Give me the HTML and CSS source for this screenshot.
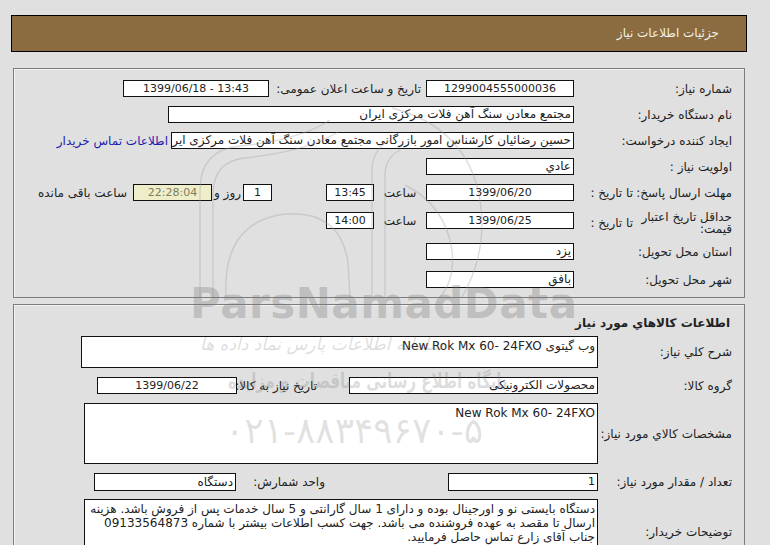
FILE: index.html
```html
<!DOCTYPE html>
<html lang="fa" dir="rtl">
<head>
<meta charset="utf-8">
<title>جزئیات اطلاعات نیاز</title>
<link rel="stylesheet" href="styles.css">
</head>
<body>
<div class="page">
  <div class="header">جزئیات اطلاعات نیاز</div>

  <div class="panel p1">
    <div class="form">
      <div class="row">
        <div class="lbl">شماره نیاز:</div>
        <div class="inp w148 c n">1299004555000036</div>
        <div class="lbl2">تاریخ و ساعت اعلان عمومی:</div>
        <div class="inp w146 c n ltr">1399/06/18 - 13:43</div>
      </div>
      <div class="row">
        <div class="lbl">نام دستگاه خریدار:</div>
        <div class="inp w406">مجتمع معادن سنگ آهن فلات مرکزی ایران</div>
      </div>
      <div class="row">
        <div class="lbl">ایجاد کننده درخواست:</div>
        <div class="inp w403">حسین رضائیان کارشناس امور بازرگانی مجتمع معادن سنگ آهن فلات مرکزی ایران</div>
        <a class="link" href="#">اطلاعات تماس خریدار</a>
      </div>
      <div class="row">
        <div class="lbl">اولویت نیاز :</div>
        <div class="inp w148">عادي</div>
      </div>
      <div class="row mb2">
        <div class="lbla">مهلت ارسال پاسخ:</div>
        <div class="sub">تا تاریخ :</div>
        <div class="inp w148 c n">1399/06/20</div>
        <div class="sa">ساعت</div>
        <div class="inp w48 c n">13:45</div>
        <div class="inp w29 c n ml">1</div>
        <div class="roz">روز و</div>
        <div class="inp cd c n">22:28:04</div>
        <div class="rem">ساعت باقی مانده</div>
      </div>
      <div class="row tall mb2">
        <div class="lbla two">حداقل تاریخ اعتبار<br>قیمت:</div>
        <div class="sub subt">تا تاریخ :</div>
        <div class="inp w148 c n">1399/06/25</div>
        <div class="sa sat">ساعت</div>
        <div class="inp w48 c n">14:00</div>
      </div>
      <div class="row mb2">
        <div class="lbl">استان محل تحویل:</div>
        <div class="inp w148">یزد</div>
      </div>
      <div class="row">
        <div class="lbl">شهر محل تحویل:</div>
        <div class="inp w148">بافق</div>
      </div>
    </div>
  </div>

  <div class="panel p2">
    <div class="title">اطلاعات کالاهاي مورد نياز</div>
    <div class="form2">
      <div class="row2">
        <div class="lblb">شرح کلي نياز:</div>
        <div class="box b517 h32">وب گیتوی New Rok Mx 60- 24FXO</div>
      </div>
      <div class="row2">
        <div class="lblb">گروه کالا:</div>
        <div class="inp w249">محصولات الکترونیکی</div>
        <div class="lblc">تاریخ نیاز به کالا:</div>
        <div class="inp w140 c n">1399/06/22</div>
      </div>
      <div class="row2">
        <div class="lblb">مشخصات کالاي مورد نياز:</div>
        <div class="box b514 h61">New Rok Mx 60- 24FXO</div>
      </div>
      <div class="row2 mb-1">
        <div class="lblb">تعداد / مقدار مورد نياز:</div>
        <div class="inp w150 h18 n">1</div>
        <div class="lbld">واحد شمارش:</div>
        <div class="inp w142 h18">دستگاه</div>
      </div>
      <div class="row2">
        <div class="lblb">توضیحات خریدار:</div>
        <div class="box b514 h66 notes">دستگاه بایستی نو و اورجینال بوده و دارای 1 سال گارانتی و 5 سال خدمات پس از فروش باشد. هزینه<br>ارسال تا مقصد به عهده فروشنده می باشد. جهت کسب اطلاعات بیشتر با شماره 09133564873<br>جناب آقای زارع تماس حاصل فرمایید.</div>
      </div>
    </div>
  </div>

  <div class="wm" aria-hidden="true">
    <svg class="wm-logo" width="770" height="545" viewBox="0 0 770 545">
      <g fill="none" stroke="#a0a0a0" stroke-width="1.4">
        <path d="M200 297 V190 Q200 150 240 146 Q300 140 330 120"/>
        <path d="M213 297 V194 Q213 162 244 158 Q305 152 338 132"/>
        <path d="M226 297 Q222 222 285 214 Q340 210 348 262 L350 297"/>
        <path d="M372 297 V170 Q372 150 390 140"/>
        <path d="M385 297 V175 Q385 158 400 150"/>
        <path d="M392 108 Q468 128 480 200 Q488 252 462 297"/>
        <path d="M405 185 Q445 205 452 250 Q455 280 440 297"/>
      </g>
    </svg>
    <div class="wm-latin">ParsNamadData</div>
    <div class="wm-fa1">سامانه اطلاعات پارس نماد داده ها</div>
    <div class="wm-fa2">پایگاه اطلاع رسانی مناقصات و مزایده</div>
    <div class="wm-fa3">۰۲۱-۸۸۳۴۹۶۷۰-۵</div>
  </div>
</div>
</body>
</html>
```
FILE: styles.css
```css
html, body {
  margin: 0;
  padding: 0;
  background: #e0e0e0;
}
body {
  direction: rtl;
  font-family: "DejaVu Sans", sans-serif;
  font-size: 12px;
  color: #222;
  overflow: hidden;
}
.page {
  position: relative;
  padding: 15px 23px 0 11px;
  width: 770px;
  height: 545px;
  box-sizing: border-box;
}
.header {
  height: 37px;
  box-sizing: border-box;
  border: 1px solid #000;
  background: #8b6c40;
  color: #f4f0e4;
  font-size: 12px;
  line-height: 35px;
  padding-right: 27px;
}
.panel {
  margin: 0 2px;
  border: 1px solid #7c7c7c;
  box-shadow: inset 1px 1px 0 #f2f2f2;
  box-sizing: border-box;
}
.p1 {
  margin-top: 16px;
  height: 230px;
  padding: 11px 12px 0 0;
}
.p2 {
  margin-top: 6px;
  height: 260px;
  padding: 10px 12px 0 0;
}
.form {
  display: flex;
  flex-direction: column;
  gap: 9px;
}
.row {
  display: flex;
  align-items: center;
  height: 17px;
  white-space: nowrap;
}
.row.tall {
  height: 20px;
  align-items: flex-start;
}
.mb2 { margin-bottom: 2px; }
.lbl { width: 158px; flex: none; }
.lbla { width: 92px; flex: none; }
.lbla.two { line-height: 12px; margin-top: -1px; }
.sub {
  width: 66px;
  flex: none;
  box-sizing: border-box;
  padding-right: 7px;
}
.subt { padding-top: 4px; }
.lbl2 {
  width: 157px;
  flex: none;
  box-sizing: border-box;
  padding-right: 5px;
}
.inp {
  flex: none;
  height: 17px;
  box-sizing: border-box;
  border: 1px solid #111;
  background: #fff;
  line-height: 15px;
  padding: 0 2px;
  white-space: nowrap;
  overflow: hidden;
  color: #222;
}
.n { font-size: 11px; }
.ltr { direction: ltr; }
.c { text-align: center; }
.w148 { width: 148px; }
.w146 { width: 146px; }
.w406 { width: 406px; }
.w403 { width: 403px; }
.w48 { width: 48px; }
.w29 { width: 29px; }
.w249 { width: 249px; }
.w140 { width: 140px; }
.w150 { width: 150px; text-align: right; }
.w142 { width: 142px; }
.h18 { height: 18px; line-height: 16px; }
.ml { margin-right: 54px; }
.sa { width: 52px; flex: none; text-align: center; }
.sat { padding-top: 2px; }
.roz { width: 31px; flex: none; text-align: center; }
.cd {
  width: 79px;
  background: #eeeecb;
  color: #7d7d5c;
}
.rem { margin-right: 6px; white-space: nowrap; }
.link {
  margin-right: 3px;
  color: #2020b0;
  text-decoration: none;
  white-space: nowrap;
}
.title {
  font-weight: bold;
  font-size: 12px;
  line-height: 16px;
  padding-right: 2px;
  margin-bottom: 5px;
}
.form2 {
  display: flex;
  flex-direction: column;
  gap: 9px;
}
.row2 {
  display: flex;
  align-items: center;
  white-space: nowrap;
}
.mb-1 { margin-bottom: -1px; }
.lblb { width: 134px; flex: none; }
.lblc {
  width: 112px;
  flex: none;
  box-sizing: border-box;
  padding-right: 32px;
}
.lbld {
  width: 212px;
  flex: none;
  box-sizing: border-box;
  padding-right: 123px;
}
.box {
  flex: none;
  box-sizing: border-box;
  border: 1px solid #111;
  background: #fff;
  padding: 2px 2px;
  line-height: 14px;
  overflow: hidden;
}
.b517 { width: 517px; }
.b514 { width: 514px; }
.h32 { height: 32px; }
.h61 { height: 61px; }
.h66 { height: 66px; }
.notes { white-space: nowrap; padding: 2px 2px; }

/* watermark overlay */
.wm {
  position: absolute;
  inset: 0;
  pointer-events: none;
  direction: ltr;
}
.wm-logo {
  position: absolute;
  left: 0;
  top: 0;
  opacity: 0.35;
}
.wm-latin {
  position: absolute;
  left: 190px;
  top: 288px;
  line-height: 32px;
  font-family: "DejaVu Sans", sans-serif;
  font-weight: bold;
  font-size: 42px;
  letter-spacing: 0.5px;
  color: rgba(120, 120, 120, 0.32);
}
.wm-fa1 {
  position: absolute;
  left: 200px;
  top: 334px;
  font-size: 17px;
  font-style: italic;
  color: rgba(120, 120, 120, 0.25);
  direction: rtl;
}
.wm-fa2 {
  position: absolute;
  left: 228px;
  top: 372px;
  font-size: 15px;
  font-weight: bold;
  transform: scaleY(1.4);
  color: rgba(120, 120, 120, 0.25);
  direction: rtl;
}
.wm-fa3 {
  position: absolute;
  left: 225px;
  top: 410px;
  font-size: 36px;
  color: rgba(120, 120, 120, 0.22);
}
```
